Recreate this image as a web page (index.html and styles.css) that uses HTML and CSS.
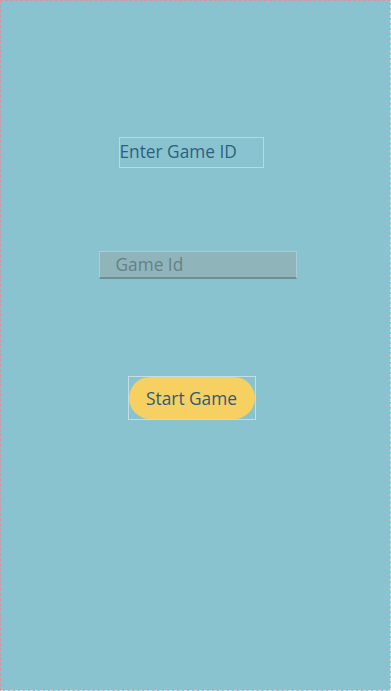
FILE: index.html
```html
<!DOCTYPE html>
<html lang="en">
<head>
  <meta charset="UTF-8">
  <meta name="viewport" content="width=device-width, initial-scale=1.0">
  <title>Join Game</title>
  <link rel="stylesheet" href="styles.css">
</head>
<body>
  <div class="screen">
    <div class="title-box">Enter Game ID</div>
    <input class="game-input" type="text" placeholder="Game Id">
    <div class="btn-frame">
      <button class="start-btn">Start Game</button>
    </div>
  </div>
</body>
</html>
```

FILE: styles.css
```css
html, body {
  margin: 0;
  padding: 0;
}

body {
  background: #8ac3d0;
  font-family: "Open Sans", "Noto Sans", sans-serif;
}

.screen {
  box-sizing: border-box;
  height: 691px;
  border: 1px dashed #d9949c;
  border-right-color: #e8d8e4;
  border-bottom-color: #e8d8e4;
  display: flex;
  flex-direction: column;
  align-items: center;
  padding-top: 136px;
}

.title-box {
  box-sizing: border-box;
  width: 145px;
  height: 31px;
  margin-left: -9px;
  border: 1px solid #b7d9e0;
  color: #2f5f80;
  font-size: 17.3px;
  line-height: 28px;
  white-space: nowrap;
}

.game-input {
  box-sizing: border-box;
  width: 198px;
  height: 28px;
  margin-top: 83px;
  margin-left: 4px;
  padding: 0 0 0 16px;
  background: #8fb5bb;
  border: 1px solid #a8cdd4;
  border-bottom: 2px solid #6f8e94;
  font-family: inherit;
  font-size: 17.3px;
  color: #5a7278;
  outline: none;
}

.game-input::placeholder {
  color: #687f85;
}

.btn-frame {
  box-sizing: border-box;
  width: 128px;
  height: 44px;
  margin-top: 97px;
  margin-left: -8px;
  border: 1px solid #c4dfe4;
  display: flex;
}

.start-btn {
  flex: 1;
  margin: 0;
  border: none;
  border-radius: 22px;
  background: #f6d060;
  color: #2f5a80;
  font-family: inherit;
  font-size: 17.3px;
  cursor: pointer;
}
```
